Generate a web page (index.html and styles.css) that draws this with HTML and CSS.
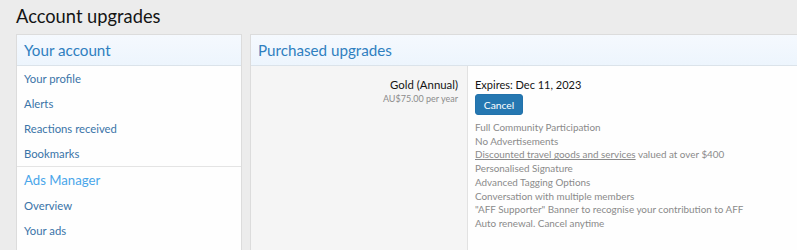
FILE: index.html
```html
<!DOCTYPE html>
<html>
<head>
<meta charset="utf-8">
<link rel="stylesheet" href="styles.css">
</head>
<body>
<div class="page">
  <h1 class="title">Account upgrades</h1>
  <div class="cols">
    <aside class="side block">
      <h2 class="block-header">Your account</h2>
      <ul class="nav nav-first">
        <li><a>Your profile</a></li>
        <li><a>Alerts</a></li>
        <li><a>Reactions received</a></li>
        <li><a>Bookmarks</a></li>
      </ul>
      <h3 class="minor-header">Ads Manager</h3>
      <ul class="nav">
        <li><a>Overview</a></li>
        <li><a>Your ads</a></li>
      </ul>
    </aside>
    <main class="main block">
      <h2 class="block-header">Purchased upgrades</h2>
      <div class="pair">
        <div class="pair-label">
          <div class="upgrade-name">Gold (Annual)</div>
          <div class="upgrade-price">AU$75.00 per year</div>
        </div>
        <div class="pair-value">
          <div class="expires">Expires: Dec 11, 2023</div>
          <button class="btn">Cancel</button>
          <ul class="perks">
            <li>Full Community Participation</li>
            <li>No Advertisements</li>
            <li><u>Discounted travel goods and services</u> valued at over $400</li>
            <li>Personalised Signature</li>
            <li>Advanced Tagging Options</li>
            <li>Conversation with multiple members</li>
            <li>"AFF Supporter" Banner to recognise your contribution to AFF</li>
            <li>Auto renewal. Cancel anytime</li>
          </ul>
        </div>
      </div>
    </main>
  </div>
</div>
</body>
</html>
```
FILE: styles.css
```css
* { box-sizing: border-box; }
html, body { margin: 0; padding: 0; }
body {
  background: #ececec;
  font-family: Lato, "Noto Sans", sans-serif;
  color: #141414;
  height: 250px;
  overflow: hidden;
}
.page { padding: 0 0 0 16px; }
.title {
  margin: 0;
  padding-top: 3px;
  height: 32px;
  font-size: 18.3px;
  font-weight: 400;
  line-height: 26px;
}
.cols {
  display: flex;
  gap: 8px;
  align-items: stretch;
  margin-top: 2px;
}
.block {
  background: #fefefe;
  border: 1px solid #dcdcdc;
  border-bottom: none;
  height: 220px;
}
.side { width: 226px; flex: none; }
.main { flex: 1; margin-right: -10px; }
.block-header {
  margin: 0;
  height: 31px;
  padding: 0 7px;
  font-size: 15.2px;
  font-weight: 400;
  line-height: 30px;
  color: #2f7fc0;
  background: linear-gradient(#f5f9fe, #edf5fd);
  border-bottom: 1px solid #dbe3ea;
}
.nav { list-style: none; margin: 0; padding: 0; }
.nav li { height: 25px; line-height: 25px; padding: 0 7px; font-size: 11.3px; }
.nav a { color: #3a74a8; }
.nav-first { border-bottom: 1px solid #e4e4e4; }
.minor-header {
  margin: 0;
  padding: 0 7px;
  height: 26px;
  line-height: 26px;
  font-size: 13.2px;
  font-weight: 400;
  color: #4aa6ea;
}
.pair { display: flex; height: 200px; }
.pair-label {
  width: 217px;
  flex: none;
  background: #f5f5f5;
  border-right: 1px solid #e2e2e2;
  text-align: right;
  padding: 12px 9px 0 0;
}
.upgrade-name { font-size: 11.4px; line-height: 14px; color: #141414; }
.upgrade-price { font-size: 9px; line-height: 14px; color: #8c8c8c; }
.pair-value { padding: 11px 7px 0 7px; }
.expires { font-size: 11px; line-height: 16px; color: #141414; }
.btn {
  display: block;
  margin-top: 1px;
  width: 48px;
  height: 21px;
  padding: 0;
  border: 1px solid #2272ab;
  border-radius: 3px;
  background: #2577b1;
  color: #fff;
  font-family: inherit;
  font-size: 10.3px;
}
.perks {
  list-style: none;
  margin: 6px 0 0;
  padding: 0;
  font-size: 9.9px;
  line-height: 13.7px;
  color: #8a8a8a;
}
.perks u { color: #8a8a8a; }
```
